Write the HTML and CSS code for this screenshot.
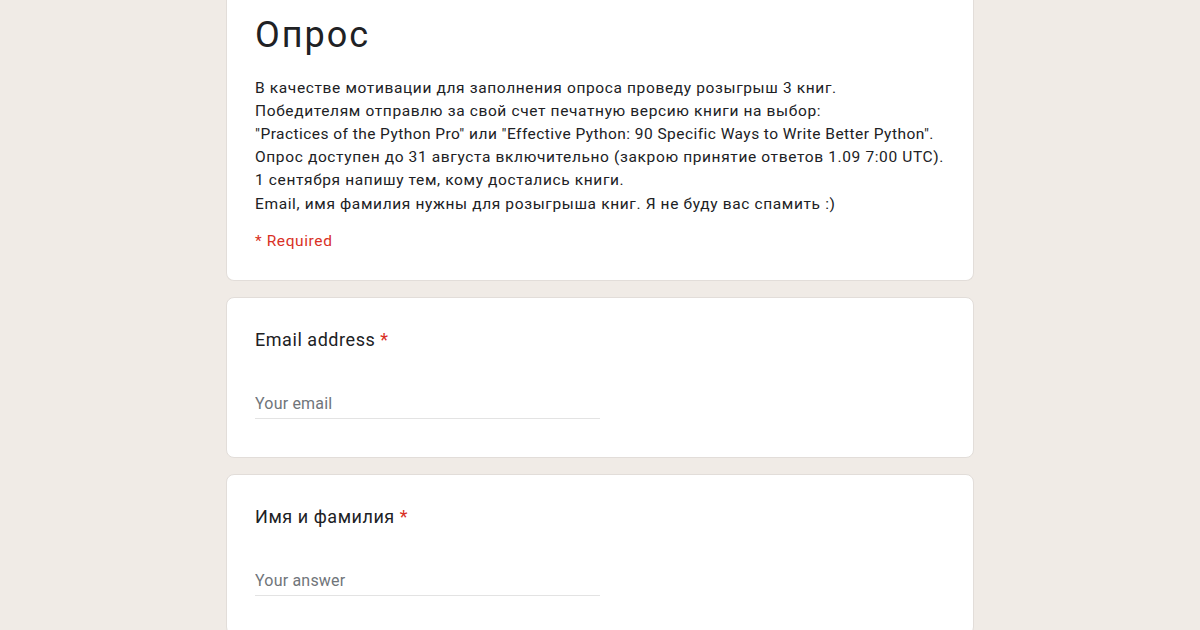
FILE: index.html
```html
<!DOCTYPE html>
<html lang="ru">
<head>
  <meta charset="UTF-8">
  <meta name="viewport" content="width=device-width, initial-scale=1.0">
  <title>Опрос</title>
  <link rel="stylesheet" href="styles.css">
</head>
<body>
  <div class="container">
    <div class="card form-head">
      <h1>Опрос</h1>
      <div class="description">
        В качестве мотивации для заполнения опроса проведу розыгрыш 3 книг.<br>
        Победителям отправлю за свой счет печатную версию книги на выбор:<br>
        <span class="latin">"Practices of the Python Pro" или "Effective Python: 90 Specific Ways to Write Better Python".</span><br>
        Опрос доступен до 31 августа включительно (закрою принятие ответов 1.09 7:00 UTC).<br>
        1 сентября напишу тем, кому достались книги.<br>
        Email, имя фамилия нужны для розыгрыша книг. Я не буду вас спамить :)
      </div>
      <div class="required-note">* Required</div>
    </div>

    <div class="card question">
      <label for="email" class="question-title">Email address <span class="star">*</span></label>
      <input type="email" id="email" name="email" placeholder="Your email">
    </div>

    <div class="card question">
      <label for="name" class="question-title">Имя и фамилия <span class="star">*</span></label>
      <input type="text" id="name" name="name" placeholder="Your answer">
    </div>
  </div>
</body>
</html>
```

FILE: styles.css
```css
body {
  font-family: Roboto, "Liberation Sans", Arial, sans-serif;
  background-color: #f0ebe6;
  color: #202124;
  margin: 0;
  padding: 0;
}
.container {
  width: 748px;
  margin: 0 auto;
  display: flex;
  flex-direction: column;
  gap: 16px;
}
.card {
  background-color: #fff;
  border: 1px solid #e2ddd9;
  border-radius: 8px;
  padding: 0 28px;
}
.form-head {
  border-top: none;
  border-radius: 0 0 8px 8px;
  padding-top: 13px;
  padding-bottom: 27px;
}
h1 {
  margin: 0;
  font-size: 36px;
  line-height: 44px;
  font-weight: 400;
  letter-spacing: 2px;
}
.description {
  margin-top: 19.5px;
  font-size: 15.5px;
  line-height: 23.2px;
  letter-spacing: 0.63px;
  white-space: nowrap;
}
.description .latin {
  letter-spacing: 0.45px;
}
.required-note {
  margin-top: 14.5px;
  font-size: 15.5px;
  line-height: 23px;
  letter-spacing: 0.6px;
  color: #d93025;
}
.question {
  padding-top: 30px;
  padding-bottom: 38px;
  display: flex;
  flex-direction: column;
  align-items: flex-start;
}
.question-title {
  font-size: 18px;
  line-height: 24px;
  letter-spacing: 0.55px;
}
.star {
  color: #d93025;
}
.question input {
  margin-top: 36px;
  width: 345px;
  height: 30px;
  padding: 0;
  border: none;
  border-bottom: 1px solid #e3e3e3;
  font-family: inherit;
  font-size: 16px;
  letter-spacing: 0.2px;
  color: #202124;
  outline: none;
}
.question input::placeholder {
  color: #70757a;
}
```
